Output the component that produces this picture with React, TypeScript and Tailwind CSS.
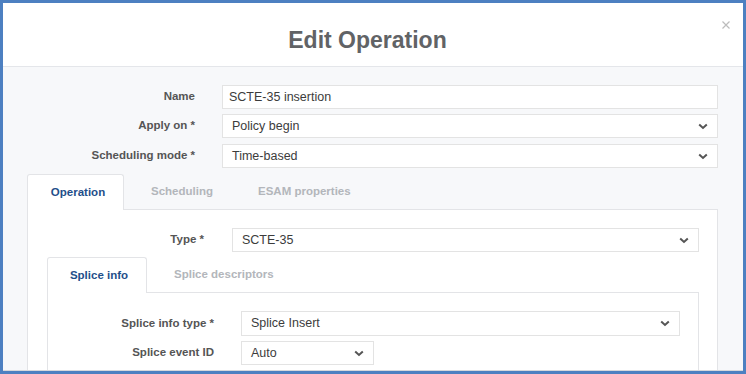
import React from 'react';

const Chevron: React.FC = () => (
  <svg width="10" height="7" viewBox="0 0 10 7" className="shrink-0">
    <path d="M1.2 1.5 L5 5 L8.8 1.5" fill="none" stroke="#555" strokeWidth="2" />
  </svg>
);

const TextInput: React.FC<{ value: string }> = ({ value }) => (
  <div className="flex-1 h-[24px] bg-white border border-[#e3e3e3] flex items-center pl-[6px] text-[12.5px] text-[#3c3c3c]">
    {value}
  </div>
);

const Select: React.FC<{ value: string; className?: string }> = ({ value, className }) => (
  <div
    className={`h-[24px] bg-white border border-[#e3e3e3] flex items-center justify-between pl-[9px] pr-[9px] text-[12.5px] text-[#3c3c3c] ${className ?? 'flex-1'}`}
  >
    <span>{value}</span>
    <Chevron />
  </div>
);

const Row: React.FC<{ label: string; labelW: string; gap: string; children: React.ReactNode; className?: string }> = ({
  label,
  labelW,
  gap,
  children,
  className,
}) => (
  <div className={`flex items-center ${gap} ${className ?? ''}`}>
    <div className={`${labelW} shrink-0 text-right text-[11.5px] font-bold text-[#555]`}>{label}</div>
    {children}
  </div>
);

const App: React.FC = () => {
  return (
    <div
      className="w-[746px] h-[374px] border-[3px] border-[#4d80c1] bg-white flex flex-col overflow-hidden"
      style={{ fontFamily: '"Liberation Sans", Arial, sans-serif' }}
    >
      <header className="h-[64px] shrink-0 border-b border-[#e4e6ea] relative flex items-center justify-center">
        <h1 className="text-[23px] font-bold text-[#616366] mr-[11px] mt-[11px]">Edit Operation</h1>
        <button aria-label="Close" className="absolute right-[13px] top-[18px]">
          <svg width="8" height="8" viewBox="0 0 8 8">
            <path d="M0.5 0.5 L7.5 7.5 M7.5 0.5 L0.5 7.5" stroke="#bcbcbc" strokeWidth="1.2" />
          </svg>
        </button>
      </header>

      <main className="flex-1 bg-[#f7f8fa] pl-[24px] pr-[25px] pt-[18px] overflow-hidden flex flex-col border-b border-[#d6d8dc]">
        <Row label="Name" labelW="w-[168px]" gap="gap-[27px]">
          <TextInput value="SCTE-35 insertion" />
        </Row>
        <Row label="Apply on *" labelW="w-[168px]" gap="gap-[27px]" className="mt-[5px]">
          <Select value="Policy begin" />
        </Row>
        <Row label="Scheduling mode *" labelW="w-[168px]" gap="gap-[27px]" className="mt-[6px]">
          <Select value="Time-based" />
        </Row>

        <div className="mt-[6px] flex text-[11.5px] font-bold">
          <div className="w-[97px] h-[36px] bg-white border border-b-0 border-[#e3e4e7] rounded-t-[3px] flex items-center justify-center pl-[5px] text-[#1f4f8a] -mb-[1px] relative z-10">
            Operation
          </div>
          <div className="h-[35px] flex items-center pl-[27px] text-[#b3b6bb]">Scheduling</div>
          <div className="h-[35px] flex items-center pl-[45px] text-[#b3b6bb]">ESAM properties</div>
        </div>

        <div className="flex-1 bg-white border border-[#e3e4e7] border-b-0 pt-[18px] pl-[19px] pr-[18px]">
          <Row label="Type *" labelW="w-[157px]" gap="gap-[28px]">
            <Select value="SCTE-35" />
          </Row>

          <div className="mt-[5px] flex text-[11.5px] font-bold">
            <div className="w-[100px] h-[36px] bg-white border border-b-0 border-[#e3e4e7] rounded-t-[3px] flex items-center justify-center pl-[4px] text-[#1f4f8a] -mb-[1px] relative z-10">
              Splice info
            </div>
            <div className="h-[35px] flex items-center pl-[27px] text-[#b3b6bb]">Splice descriptors</div>
          </div>

          <div className="h-[120px] bg-white border border-[#e3e4e7] pt-[18px] pl-[18px] pr-[18px]">
            <Row label="Splice info type *" labelW="w-[148px]" gap="gap-[27px]">
              <Select value="Splice Insert" className="flex-1 h-[25px]" />
            </Row>
            <Row label="Splice event ID" labelW="w-[148px]" gap="gap-[27px]" className="mt-[5px]">
              <Select value="Auto" className="w-[133px]" />
            </Row>
          </div>
        </div>
      </main>
    </div>
  );
};

export default App;
